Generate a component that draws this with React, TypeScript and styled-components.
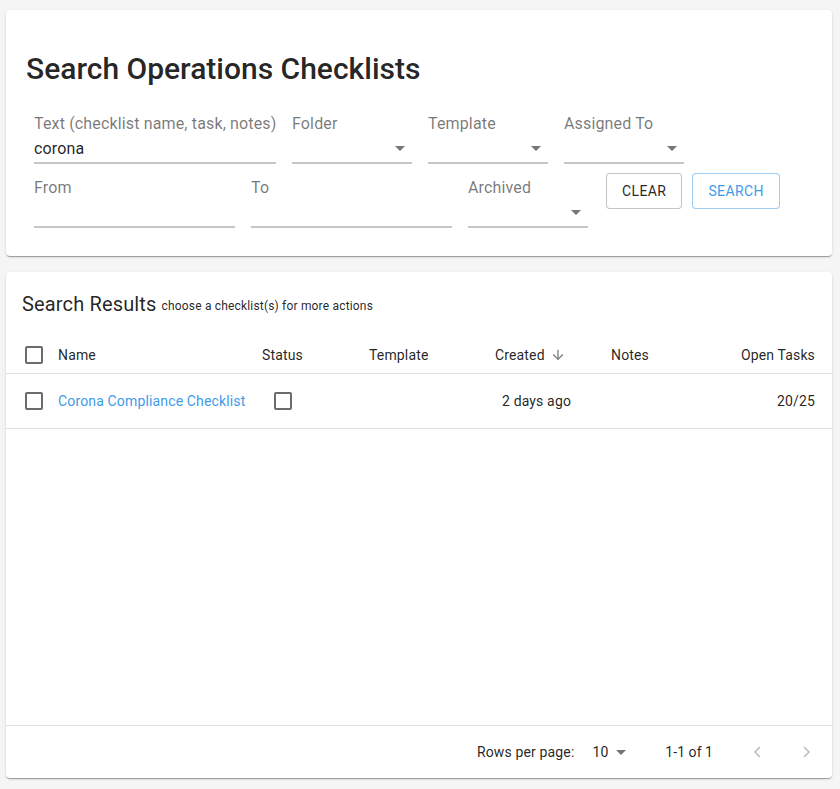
import React from "react";
import styled, { createGlobalStyle } from "styled-components";

const GlobalStyle = createGlobalStyle`
  html, body { margin: 0; padding: 0; }
  body {
    background: #f5f5f5;
    font-family: Roboto, "Liberation Sans", Arial, sans-serif;
    color: rgba(0, 0, 0, 0.87);
  }
  * { box-sizing: border-box; }
`;

const Page = styled.div`
  padding: 10px 8px 11px 6px;
  display: flex;
  flex-direction: column;
  gap: 16px;
`;

const Card = styled.section<{ $height?: number }>`
  background: #fff;
  border-radius: 4px;
  box-shadow: 0px 2px 1px -1px rgba(0, 0, 0, 0.2), 0px 1px 1px 0px rgba(0, 0, 0, 0.14),
    0px 1px 3px 0px rgba(0, 0, 0, 0.12);
  ${(p) => (p.$height ? `height: ${p.$height}px;` : "")}
`;

const SearchCard = styled(Card)`
  padding: 43px 20px 28px 20px;
`;

const Title = styled.h1`
  margin: 0;
  font-size: 30px;
  line-height: 32px;
  font-weight: 500;
  color: rgba(0, 0, 0, 0.87);
`;

const Form = styled.div`
  margin: 31px 0 0 8px;
  display: flex;
  flex-direction: column;
  gap: 16px;
`;

const FormRow = styled.div`
  display: flex;
  gap: 16px;
  align-items: flex-start;
`;

const Field = styled.div<{ $w: number }>`
  width: ${(p) => p.$w}px;
  display: flex;
  flex-direction: column;
`;

const Label = styled.label`
  font-size: 16px;
  line-height: 16px;
  letter-spacing: 0.15px;
  color: rgba(0, 0, 0, 0.54);
  white-space: nowrap;
`;

const InputArea = styled.div`
  position: relative;
  padding: 7px 0 4px;
  height: 32px;
  border-bottom: 2px solid #c6c6c6;
  font-size: 16px;
  line-height: 19px;
  letter-spacing: 0.15px;
  color: rgba(0, 0, 0, 0.87);
`;

const DropIcon = styled.svg`
  position: absolute;
  right: 0;
  bottom: 2px;
  width: 24px;
  height: 24px;
  fill: rgba(0, 0, 0, 0.54);
`;

const Buttons = styled.div`
  display: flex;
  gap: 10px;
  margin: -7px 0 0 2px;
`;

const OutlineButton = styled.button<{ $primary?: boolean }>`
  height: 36px;
  padding: 0 15px;
  border-radius: 4px;
  background: #fff;
  font-family: Roboto, "Liberation Sans", Arial, sans-serif;
  font-size: 14px;
  font-weight: 400;
  letter-spacing: 0.4px;
  text-transform: uppercase;
  color: ${(p) => (p.$primary ? "#3f9be9" : "rgba(0,0,0,0.87)")};
  border: 1px solid ${(p) => (p.$primary ? "rgba(63,155,233,0.5)" : "rgba(0,0,0,0.23)")};
  cursor: pointer;
`;

const ResultsCard = styled(Card)`
  display: flex;
  flex-direction: column;
`;

const ResultsBar = styled.div`
  height: 64px;
  padding-left: 16px;
  display: flex;
  align-items: center;
  gap: 5px;
`;

const ResultsTitle = styled.h2`
  margin: 0;
  font-size: 20px;
  line-height: 24px;
  font-weight: 400;
  letter-spacing: 0.15px;
  color: rgba(0, 0, 0, 0.87);
`;

const ResultsHint = styled.span`
  font-size: 12px;
  line-height: 14px;
  margin-top: 4px;
  letter-spacing: 0.18px;
  color: rgba(0, 0, 0, 0.87);
`;

const TableRow = styled.div<{ $h: number }>`
  display: grid;
  grid-template-columns: 33px 204px 107px 126px 116px 1fr auto;
  align-items: center;
  height: ${(p) => p.$h}px;
  padding: 0 17px 0 19px;
  border-bottom: 1px solid #e0e0e0;
  font-size: 14px;
  line-height: 16px;
  letter-spacing: 0.15px;
  color: rgba(0, 0, 0, 0.87);
`;

const Cell = styled.div<{ $indent?: number; $right?: boolean }>`
  display: flex;
  align-items: center;
  padding-left: ${(p) => p.$indent ?? 0}px;
  justify-content: ${(p) => (p.$right ? "flex-end" : "flex-start")};
  white-space: nowrap;
`;

const Box = styled.span`
  display: inline-block;
  width: 18px;
  height: 18px;
  border: 2px solid rgba(0, 0, 0, 0.58);
  border-radius: 2px;
`;

const LinkText = styled.a`
  color: #3f9be9;
  text-decoration: none;
`;

const SortIcon = styled.svg`
  width: 16px;
  height: 16px;
  margin-left: 5px;
  fill: rgba(0, 0, 0, 0.5);
`;

const Filler = styled.div`
  flex: 1;
`;

const Footer = styled.div`
  height: 53px;
  border-top: 1px solid #e0e0e0;
  display: flex;
  align-items: center;
  justify-content: flex-end;
  padding-right: 2px;
  font-size: 14px;
  letter-spacing: 0.05px;
  color: rgba(0, 0, 0, 0.87);
`;

const RowsLabel = styled.span`
  letter-spacing: 0.15px;
`;

const PerPage = styled.div`
  display: flex;
  align-items: center;
  margin-left: 18px;
`;

const SmallDrop = styled.svg`
  width: 24px;
  height: 24px;
  margin-left: 1px;
  fill: rgba(0, 0, 0, 0.54);
`;

const Range = styled.span`
  margin-left: 32px;
  margin-right: 21px;
`;

const PageButton = styled.button`
  width: 48px;
  height: 48px;
  border: 0;
  background: transparent;
  display: flex;
  align-items: center;
  justify-content: center;
  padding: 0;
`;

const Chevron = styled.svg`
  width: 10px;
  height: 12px;
  fill: none;
  stroke: rgba(0, 0, 0, 0.26);
  stroke-width: 1.6;
`;

const ArrowDrop = ({ small }: { small?: boolean }) =>
  small ? (
    <SmallDrop viewBox="0 0 24 24">
      <path d="M7 10l5 5 5-5z" />
    </SmallDrop>
  ) : (
    <DropIcon viewBox="0 0 24 24">
      <path d="M7 10l5 5 5-5z" />
    </DropIcon>
  );

const TextField = ({ label, w, value, select }: { label: string; w: number; value?: string; select?: boolean }) => (
  <Field $w={w}>
    <Label>{label}</Label>
    <InputArea>
      {value}
      {select && <ArrowDrop />}
    </InputArea>
  </Field>
);

export default function App() {
  return (
    <>
      <GlobalStyle />
      <Page>
        <SearchCard>
          <Title>Search Operations Checklists</Title>
          <Form>
            <FormRow>
              <TextField label="Text (checklist name, task, notes)" w={242} value="corona" />
              <TextField label="Folder" w={120} select />
              <TextField label="Template" w={120} select />
              <TextField label="Assigned To" w={120} select />
            </FormRow>
            <FormRow>
              <TextField label="From" w={201} />
              <TextField label="To" w={201} />
              <TextField label="Archived" w={120} select />
              <Buttons>
                <OutlineButton>Clear</OutlineButton>
                <OutlineButton $primary>Search</OutlineButton>
              </Buttons>
            </FormRow>
          </Form>
        </SearchCard>

        <ResultsCard $height={506}>
          <ResultsBar>
            <ResultsTitle>Search Results</ResultsTitle>
            <ResultsHint>choose a checklist(s) for more actions</ResultsHint>
          </ResultsBar>
          <TableRow $h={38}>
            <Cell>
              <Box />
            </Cell>
            <Cell>Name</Cell>
            <Cell>Status</Cell>
            <Cell>Template</Cell>
            <Cell>
              Created
              <SortIcon viewBox="0 0 24 24">
                <path d="M20 12l-1.41-1.41L13 16.17V4h-2v12.17l-5.58-5.59L4 12l8 8 8-8z" />
              </SortIcon>
            </Cell>
            <Cell>Notes</Cell>
            <Cell $right>Open Tasks</Cell>
          </TableRow>
          <TableRow $h={55}>
            <Cell>
              <Box />
            </Cell>
            <Cell>
              <LinkText href="#">Corona Compliance Checklist</LinkText>
            </Cell>
            <Cell $indent={12}>
              <Box />
            </Cell>
            <Cell />
            <Cell $indent={7}>2 days ago</Cell>
            <Cell />
            <Cell $right>20/25</Cell>
          </TableRow>
          <Filler />
          <Footer>
            <RowsLabel>Rows per page:</RowsLabel>
            <PerPage>
              <span>10</span>
              <ArrowDrop small />
            </PerPage>
            <Range>1-1 of 1</Range>
            <PageButton aria-label="previous page">
              <Chevron viewBox="0 0 10 12">
                <polyline points="7,1 2,6 7,11" />
              </Chevron>
            </PageButton>
            <PageButton aria-label="next page">
              <Chevron viewBox="0 0 10 12">
                <polyline points="3,1 8,6 3,11" />
              </Chevron>
            </PageButton>
          </Footer>
        </ResultsCard>
      </Page>
    </>
  );
}
